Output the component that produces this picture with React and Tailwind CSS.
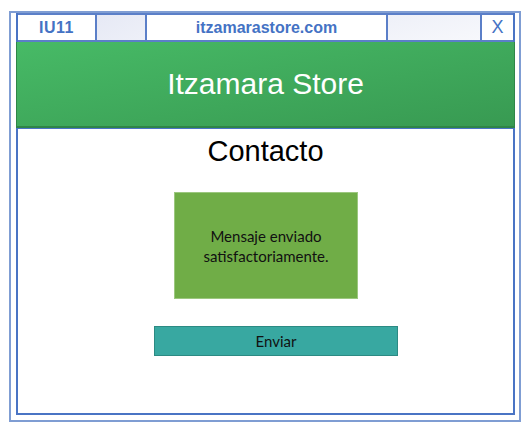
export default function App() {
  return (
    <div className="w-[532px] h-[433px] bg-white pt-[11px] pl-[9px]" style={{ fontFamily: '"Liberation Sans", Arial, sans-serif' }}>
      {/* marco exterior */}
      <div className="w-[512px] h-[411px] border-2 border-[#7f9dd3] pl-[5px] pr-[4px] pb-[5px]">
        {/* marco interior */}
        <div className="h-full border-2 border-t-0 border-[#4a74c4] flex flex-col">
          {/* barra superior */}
          <div className="flex h-[29px] border-y-2 border-[#5b7fc8] text-[#4472c4]">
            <div className="w-[77px] flex items-center justify-center font-bold text-[16px] tracking-[0.5px] bg-white">IU11</div>
            <div className="w-[50px] border-l-2 border-[#5b7fc8] bg-gradient-to-br from-[#e6e9f5] to-[#eef0f8]" />
            <div className="w-[241px] border-l-2 border-[#5b7fc8] flex items-center justify-center font-bold text-[16px] bg-white">itzamarastore.com</div>
            <div className="w-[94px] border-l-2 border-[#5b7fc8] bg-gradient-to-br from-[#eef0f8] to-[#f7f8fc]" />
            <div className="flex-1 border-l-2 border-[#5b7fc8] flex items-center justify-center text-[18px] bg-white">X</div>
          </div>
          {/* cabecera */}
          <div className="-ml-[2px] -mr-[2px] h-[86px] bg-gradient-to-br from-[#47ba66] to-[#389a52] border-x border-b-2 border-[#2f8547] flex items-center justify-center">
            <span className="text-white text-[30px] leading-none">Itzamara Store</span>
          </div>
          <div className="h-[1px] bg-[#4a74c4] -mx-[2px]" />
          {/* contenido */}
          <div className="flex-1 flex flex-col">
            <h1 className="text-center text-[29px] leading-none text-black mt-[8px]">Contacto</h1>
            <div className="ml-[156px] mt-[26px] w-[184px] h-[107px] bg-[#70ad47] border border-[#9cc77f] flex items-center justify-center text-center text-[15px] leading-[20px] text-[#111]" style={{ fontFamily: 'Lato, "Liberation Sans", sans-serif' }}>
              <p>
                Mensaje enviado
                <br />
                satisfactoriamente.
              </p>
            </div>
            <button className="ml-[136px] mt-[27px] w-[244px] h-[30px] bg-[#38a8a1] border border-[#2c8a83] text-[15px] text-[#111] flex items-center justify-center" style={{ fontFamily: 'Lato, "Liberation Sans", sans-serif' }}>
              Enviar
            </button>
          </div>
        </div>
      </div>
    </div>
  );
}
